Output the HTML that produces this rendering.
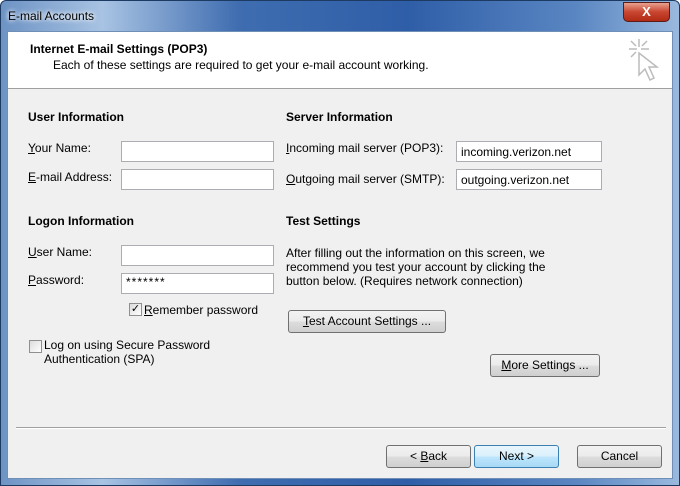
<!DOCTYPE html>
<html><head><style>
*{margin:0;padding:0;box-sizing:border-box}
body{width:680px;height:486px;overflow:hidden;font-family:"Liberation Sans",sans-serif;font-size:12px;color:#000;background:#fff}
.win{position:absolute;left:0;top:0;width:680px;height:486px;border-radius:6px 6px 0 0;background:linear-gradient(90deg,#6d93c4 0%,#a8c3e3 15%,#3f6db0 35%,#2f5ea8 60%,#5a86c2 85%,#9ab9de 100%);border:1px solid #1c3a62}
.title{position:absolute;left:7px;top:8px;font-size:12px;color:#000;text-shadow:0 0 6px #fff,0 0 4px #fff}
.close{position:absolute;left:622px;top:1px;width:47px;height:20px;border:1px solid #5a1c14;border-radius:0 0 5px 5px;background:linear-gradient(#e8a190,#c8452f 50%,#b12a15);color:#fff;font-weight:bold;text-align:center;font-size:13px;line-height:18px}
.client{position:absolute;left:7px;top:31px;width:666px;height:448px;background:#f0f0f0;border:1px solid #6f8fb7}
.hdr{position:absolute;left:0;top:0;width:664px;height:57px;background:#fff;border-bottom:1px solid #a0a0a0}
.a{position:absolute;white-space:nowrap}
.b{font-weight:bold}
.in{position:absolute;height:21px;background:#fff;border:1px solid #abadb3;padding:3px 4px;font-size:12px}
.btn{position:absolute;height:23px;border:1px solid #707070;border-radius:3px;background:linear-gradient(#f2f2f2 0%,#ebebeb 50%,#dddddd 51%,#cfcfcf 100%);text-align:center;line-height:21px}
.btn.def{border-color:#3c7fb1;background:linear-gradient(#eaf6fd 0%,#d9f0fc 50%,#bee6fd 51%,#a7d9f5 100%)}
.cb{position:absolute;width:13px;height:13px;border:1px solid #8f8f8f;background:linear-gradient(135deg,#dcdcdc,#fff);font-size:11px;line-height:11px;text-align:center}
u{text-decoration:underline}
</style></head><body>
<div class="win">
<div class="title">E-mail Accounts</div>
<div class="close">X</div>
</div>
<div class="client">
<div class="hdr">
<div class="a b" style="left:22px;top:10px">Internet E-mail Settings (POP3)</div>
<div class="a" style="left:45px;top:26px">Each of these settings are required to get your e-mail account working.</div>
<svg class="a" style="left:617px;top:5px" width="36" height="50" viewBox="0 0 36 50"><g stroke="#bbb" stroke-width="1.5" fill="none"><path d="M14 2v8M4 12h8M16 12h8M6 4l5 5M22 4l-5 5M6 20l5-5"/><path d="M14 16v22l6-6 5 11 4-2-5-11h8z" fill="#fff"/></g></svg>
</div>
<div style="position:absolute;left:8px;top:395px;width:650px;border-top:1px solid #a0a0a0;border-bottom:1px solid #fff"></div>

<div class="a b" style="left:20px;top:78px">User Information</div>
<div class="a" style="left:20px;top:109px"><u>Y</u>our Name:</div>
<div class="in" style="left:113px;top:109px;width:153px"></div>
<div class="a" style="left:20px;top:138px"><u>E</u>-mail Address:</div>
<div class="in" style="left:113px;top:137px;width:153px"></div>

<div class="a b" style="left:20px;top:182px">Logon Information</div>
<div class="a" style="left:20px;top:213px"><u>U</u>ser Name:</div>
<div class="in" style="left:113px;top:213px;width:153px"></div>
<div class="a" style="left:20px;top:241px"><u>P</u>assword:</div>
<div class="in" style="left:113px;top:241px;width:153px;padding-top:1px;letter-spacing:1px">*******</div>
<div class="cb" style="left:121px;top:271px">✓</div>
<div class="a" style="left:136px;top:271px"><u>R</u>emember password</div>
<div class="cb" style="left:21px;top:308px"></div>
<div class="a" style="left:36px;top:306px">Log on using Secure Password</div>
<div class="a" style="left:36px;top:320px">Authentication (SPA)</div>

<div class="a b" style="left:278px;top:78px">Server Information</div>
<div class="a" style="left:278px;top:109px"><u>I</u>ncoming mail server (POP3):</div>
<div class="in" style="left:448px;top:109px;width:146px">incoming.verizon.net</div>
<div class="a" style="left:278px;top:140px"><u>O</u>utgoing mail server (SMTP):</div>
<div class="in" style="left:448px;top:137px;width:146px">outgoing.verizon.net</div>

<div class="a b" style="left:278px;top:182px">Test Settings</div>
<div class="a" style="left:278px;top:214px;line-height:14px">After filling out the information on this screen, we<br>recommend you test your account by clicking the<br>button below. (Requires network connection)</div>
<div class="btn" style="left:280px;top:278px;width:158px"><u>T</u>est Account Settings ...</div>
<div class="btn" style="left:482px;top:322px;width:110px"><u>M</u>ore Settings ...</div>

<div class="btn" style="left:378px;top:413px;width:85px">&lt; <u>B</u>ack</div>
<div class="btn def" style="left:466px;top:413px;width:85px">Next &gt;</div>
<div class="btn" style="left:569px;top:413px;width:85px">Cancel</div>
</div>
</body></html>
